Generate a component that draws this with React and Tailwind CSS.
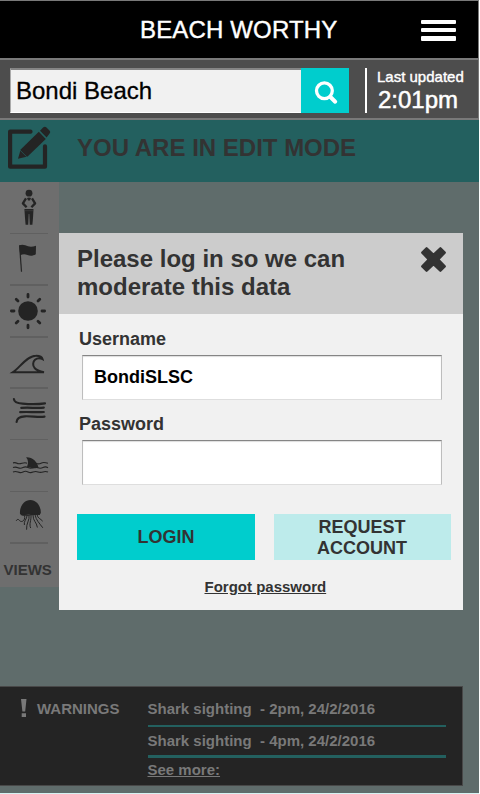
import React from 'react';

const INK = '#242424';

function PersonIcon() {
  return (
    <svg width="59" height="51" viewBox="0 182 59 51" fill={INK}>
      <circle cx="29" cy="193.2" r="3.4" />
      <path d="M26 198.4L22.9 203.4L26.6 207.3M32 198.4L35.1 203.4L31.4 207.3" fill="none" stroke={INK} strokeWidth="2.3" strokeLinejoin="round" />
      <path d="M27 198L29 197.4L31 198L30 200.6H28z" />
      <path d="M24.4 209H33.5L33 218L32.4 224.7H29.8L29.3 214H28.7L28.2 224.7H25.6L25 218z" />
      <path d="M24.7 210.7H33.3" stroke="#555" strokeWidth=".4" />
    </svg>
  );
}

function FlagIcon() {
  return (
    <svg width="59" height="50" viewBox="0 234 59 50" fill={INK}>
      <path d="M19.6 245.4L21.5 271.8" stroke={INK} strokeWidth="1.2" />
      <path d="M19.3 245.2C23 243.8 25.5 245.3 28 246.2C30.5 247 33 246.7 36 245.7L35.8 254.2C33 256 30 256 27.5 255C25 254.1 23 254 20.2 255.2z" />
    </svg>
  );
}

function SunIcon() {
  return (
    <svg width="59" height="50" viewBox="0 286 59 50" fill={INK} stroke={INK} strokeWidth="2.8" strokeLinecap="round">
      <circle cx="28" cy="311" r="9.8" stroke="none" />
      <path d="M28 294.4V297M28 325.2V327.8M11.4 311H14M42 311H44.6M16.2 299.2L18 301M38 321.2L39.8 323M39.8 299.2L38 301M18 321.2L16.2 323" />
    </svg>
  );
}

function WaveIcon() {
  return (
    <svg width="59" height="49" viewBox="0 338 59 49" fill="none" stroke={INK} strokeWidth="2">
      <path d="M13 372.2C19 368.5 27 355.8 35.8 355.8C39.8 355.7 42 357 42.6 359.2C40 357.8 36.8 358.2 35 359.8C32.6 361.9 32.6 365.5 34.6 368C36.6 370.3 40 371.4 44 372.2H13z" />
    </svg>
  );
}

function RipIcon() {
  return (
    <svg width="59" height="49" viewBox="0 389 59 49" fill="none" stroke={INK} strokeWidth="2.2" strokeLinecap="round">
      <path d="M13.9 399C14.1 402.2 17.4 403.3 22.5 403.7C30 404.4 37 404.6 45 403.4" />
      <path d="M21.3 407.9C29 407.3 36 408.3 43.8 407.7M20.2 412.2C28 411.6 36 412.6 43.8 412" />
      <path d="M16.6 422C16.7 417.8 19.5 416.6 25 416.3C32 416 38 417.5 44.5 416.7" />
    </svg>
  );
}

function SharkIcon() {
  return (
    <svg width="59" height="51" viewBox="0 440 59 51" fill="none" stroke={INK} strokeWidth="1.1">
      <path d="M26.1 457.2C32 456.8 37.7 461.7 38.5 467.8C34 469 30 467.5 27 466.7C28.4 463.4 28.6 460.3 26.1 457.2z" fill={INK} stroke="none" />
      <path d="M13 462.9Q15.5 462.3 17 463.3T22 463.3T27 463.3M36 463.3Q38.5 464.5 41 463.2T48 463.3" />
      <path d="M13 467.5Q15.5 466.6 18 467.7T23 467.5T28 467.5T33 467.8T38 467.8T43 467.5T48 467.7" />
      <path d="M13 471.9Q15.5 471 18 472.1T23 471.9T28 471.9T33 472.1T38 471.9T43 471.9T48 472.1" />
    </svg>
  );
}

function JellyfishIcon() {
  return (
    <svg width="59" height="50" viewBox="0 492 59 50" fill="none" stroke={INK} strokeWidth="1">
      <path d="M20 513.8C19.3 506 24.5 500 30.4 500C36.3 500 41.2 506 40.8 513.2C38 516.5 35 513.8 31 514C26 514.2 23 516.8 20 513.8z" fill={INK} stroke="none" />
      <path d="M20.8 514.4C27 517 33 513 40 514.3" strokeWidth="1.2" />
      <path d="M24.6 515.5C25.5 521.8 20.8 522.5 19.5 520.5C18.4 518.8 17 519.2 16.2 520.8M27.2 515C26.8 519.5 23.4 521.2 24.4 525M29 515C30 520.3 26 523 26.6 529.7M31 515C31.4 520.5 28.8 524 30.7 528M33 515C32.8 521 36.7 522 37.4 527.5M35 514.8C36.4 520.5 38.6 522.2 42.8 527.8M37 514.4C37.6 518.6 40.5 518.5 42.7 521.2" />
    </svg>
  );
}

function EditIcon() {
  return (
    <svg className="block" width="59" height="62" viewBox="0 120 59 62" fill="none" stroke={INK} strokeWidth="4.2">
      <path d="M30.5 131.7H10.1V166.7H45V146.3" strokeLinejoin="round" strokeLinecap="round" />
      <path d="M18 158.8L20.7 149.4L38.8 131.8L45.8 138.9L27.6 156.6z" fill={INK} stroke="none" />
      <path d="M40 130.8L43.1 127.6Q44.8 126 46.5 127.5L49.5 130.4Q51 132 49.6 133.6L46.6 137.6z" fill={INK} stroke="none" />
      <path d="M20.2 150.3L26.8 156.9M39.2 131.2L46.4 138.4" stroke="#23605f" strokeWidth=".7" />
    </svg>
  );
}

const tools = [
  { name: 'People', Icon: PersonIcon, row: 'h-[52px]', rule: 'h-px' },
  { name: 'Flags', Icon: FlagIcon, row: 'h-[52px]', rule: 'h-0.5' },
  { name: 'Sun', Icon: SunIcon, row: 'h-[52px]', rule: 'h-0.5' },
  { name: 'Surf', Icon: WaveIcon, row: 'h-[51px]', rule: 'h-0.5' },
  { name: 'Rips', Icon: RipIcon, row: 'h-[51px]', rule: 'h-px' },
  { name: 'Sharks', Icon: SharkIcon, row: 'h-[52px]', rule: 'h-px' },
  { name: 'Jellyfish', Icon: JellyfishIcon, row: 'h-[52px]', rule: 'h-0.5' },
];

function Header() {
  return (
    <header className="flex h-[60px] items-start border-t border-r border-b-2 border-t-[#797979] border-r-[#797979] border-b-[#797979] bg-black">
      <h1 className="ml-[140px] mt-[15px] w-[281px] text-2xl leading-7 tracking-[0.15px] text-white [-webkit-text-stroke:0.4px_white]">BEACH WORTHY</h1>
      <button className="mt-[19px] flex w-[35px] flex-col gap-1">
        <span className="h-1 rounded-[1px] bg-white" />
        <span className="h-1 rounded-[1px] bg-white" />
        <span className="h-[5px] rounded-[1px] bg-white" />
      </button>
    </header>
  );
}

function SearchBar() {
  return (
    <div className="flex h-[60px] items-start border-r border-b-2 border-r-[#797979] border-b-[#797979] bg-[#4d4d4d] pt-2 pl-[10px]">
      <div className="h-[45px] w-[291px] border-t-2 border-b border-l border-t-[#858585] border-b-white border-l-[#aaa] bg-[#f1f1f1] pt-[7px] pl-[5px] text-2xl leading-7 text-black [-webkit-text-stroke:0.3px_black]">
        Bondi Beach
      </div>
      <button className="flex h-[45px] w-12 bg-[#00cdcd]">
        <svg width="48" height="45" viewBox="301 68 48 45" fill="none" stroke="white">
          <circle cx="324.4" cy="90.8" r="7.9" strokeWidth="3.3" />
          <path d="M330.2 96.8L335.2 101.7" strokeWidth="4" strokeLinecap="round" />
        </svg>
      </button>
      <div className="ml-4 h-[45px] w-0.5 bg-white" />
      <div className="ml-[10px] text-white">
        <p className="h-[18px] text-[15px] leading-[18px] [-webkit-text-stroke:0.4px_white]">Last updated</p>
        <p className="ml-px h-7 text-2xl leading-7 [-webkit-text-stroke:0.5px_white]">2:01pm</p>
      </div>
    </div>
  );
}

function Field({ label, value, space }) {
  return (
    <label className={`block ${space}`}>
      <span className="block h-[26px] pl-[2px] text-lg leading-[21px]">{label}</span>
      <span className="ml-[5px] block h-[45px] w-[360px] border border-t-[#858585] border-r-[#bdbdbd] border-b-[#dedede] border-l-[#bdbdbd] bg-white pt-[11px] pl-[11px] text-lg leading-[21px] text-black shadow-[inset_0_1px_1px_#ddd]">
        {value}
      </span>
    </label>
  );
}

function LoginDialog() {
  return (
    <section className="absolute top-[233px] left-[59px] h-[377px] w-[404px] bg-[#f1f1f1] font-bold text-[#333]">
      <div className="flex h-[81px] bg-[#ccc] pt-3 pl-[18px]">
        <h2 className="w-[343px] text-2xl leading-7">
          Please log in so we can
          <br />
          moderate this data
        </h2>
        <svg className="mt-px" width="27" height="27" viewBox="-0.7 -0.7 27 27" fill="#333" stroke="#333">
          <path d="M5.9 1.6L12.8 8.1L19.7 1.6L24 5.9L17.5 12.8L24 19.7L19.7 24L12.8 17.5L5.9 24L1.6 19.7L8.1 12.8L1.6 5.9z" strokeWidth="2.4" strokeLinejoin="round" />
        </svg>
      </div>
      <div className="pl-[18px]">
        <Field label="Username" value="BondiSLSC" space="pt-[15px]" />
        <Field label="Password" value="" space="pt-[14px]" />
        <div className="mt-[29px] flex gap-[19px] text-lg leading-[21px]">
          <button className="h-[46px] w-[178px] bg-[#00cdcd]">LOGIN</button>
          <button className="h-[46px] w-[177px] bg-[#bdebeb] pt-px pr-px">
            REQUEST
            <br />
            ACCOUNT
          </button>
        </div>
        <a className="mt-[18px] ml-[127.5px] block text-[15px] leading-[18px] underline">Forgot password</a>
      </div>
    </section>
  );
}

function Warnings() {
  return (
    <section className="flex h-[100px] w-[463px] border-t border-r border-b border-[#484848] bg-[#242424] text-[15px] leading-[18px] font-bold text-[#797979]">
      <svg className="mt-3 ml-5 block" width="8" height="20" viewBox="0 0 8 20" fill="#797979">
        <path d="M1 0H6.5L5.2 12.5H2.4zM1.7 14.3H6V18H1.7z" />
      </svg>
      <p className="mt-[13px] ml-[9px] w-[110.5px]">WARNINGS</p>
      <div className="w-[298px] pt-[13px]">
        <p className="h-[27px] border-b-2 border-[#23605f] whitespace-pre">{'Shark sighting  - 2pm, 24/2/2016'}</p>
        <p className="h-[31px] border-b-[3px] border-[#23605f] pt-[5px] whitespace-pre">{'Shark sighting  - 4pm, 24/2/2016'}</p>
        <a className="block pt-[3px] underline">See more:</a>
      </div>
    </section>
  );
}

export default function App() {
  return (
    <div className="h-[794px] w-[480px] overflow-hidden bg-white font-['Liberation_Sans',Arial,sans-serif]">
      <main className="relative flex h-[794px] w-[479px] flex-col border-b border-[#d5f3f3] bg-[#5f6c6b]">
        <Header />
        <SearchBar />
        <div className="flex h-[62px] bg-[#23605f]">
          <EditIcon />
          <p className="mt-[14px] ml-[18px] text-2xl leading-7 font-bold text-[#333]">YOU ARE IN EDIT MODE</p>
        </div>
        <nav className="h-[405px] w-[59px] bg-[#6e6e6e]">
          {tools.map(({ name, Icon, row, rule }) => (
            <div key={name} className={`flex flex-col justify-between ${row}`}>
              <Icon />
              <div className={`ml-[10px] w-[38px] bg-[#606060] ${rule}`} />
            </div>
          ))}
          <p className="pt-[17px] pl-[3.5px] text-[15px] leading-[18px] font-bold text-[#333]">VIEWS</p>
        </nav>
        <div className="mt-[99px]">
          <Warnings />
        </div>
        <LoginDialog />
      </main>
    </div>
  );
}
